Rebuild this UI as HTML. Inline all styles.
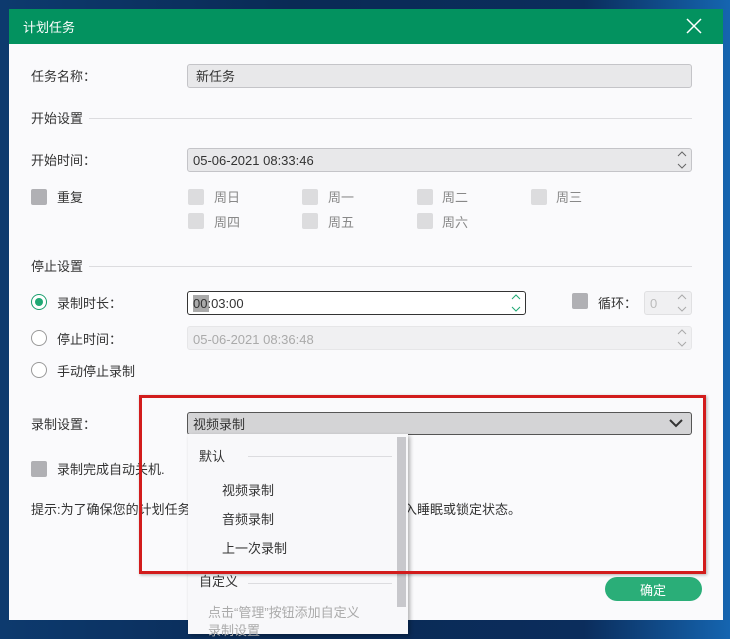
<!DOCTYPE html><html><head><meta charset="utf-8"><style>
*{margin:0;padding:0;box-sizing:border-box}
body{width:730px;height:630px;overflow:hidden;position:relative;background:linear-gradient(90deg,#0d3a6e 0%,#0a2a55 40%,#0b2d5c 80%,#1565b0 100%);font-family:"Liberation Sans","Noto Sans CJK SC",sans-serif;font-size:13px;color:#333}
.a{position:absolute}
.t{position:absolute;line-height:16px;white-space:nowrap;margin-top:1px}
.dlg{left:9px;top:9px;width:714px;height:611px;background:#fafafc}
.bar{left:9px;top:9px;width:714px;height:35px;background:#03925f}
.inp{position:absolute;border:1px solid #c4c4c8;border-radius:3px;background:#e8e8ea}
.cb{position:absolute;width:16px;height:16px;background:#dcdcde;border-radius:2px}
.cbd{background:#b0b0b4}
.line{position:absolute;height:1px;background:#dcdcdf}
.rad{position:absolute;width:16px;height:16px;border:1px solid #999;border-radius:50%;background:#fff}
.sp{position:absolute}
</style></head><body>
<div class="a dlg"></div>
<div class="a bar"></div>
<div class="t" style="left:23px;top:19px;color:#fff">计划任务</div>
<svg class="a" style="left:686px;top:18px" width="16" height="16"><path d="M1 1L15 15M15 1L1 15" stroke="#fff" stroke-width="1.5"/></svg>

<div class="t" style="left:31px;top:68px">任务名称：</div>
<div class="inp" style="left:187px;top:64px;width:505px;height:24px"></div>
<div class="t" style="left:196px;top:68px">新任务</div>

<div class="t" style="left:31px;top:110px">开始设置</div>
<div class="line" style="left:89px;top:118px;width:603px"></div>

<div class="t" style="left:31px;top:152px">开始时间：</div>
<div class="inp" style="left:187px;top:148px;width:505px;height:24px"></div>
<div class="t" style="left:193px;top:152px">05-06-2021 08:33:46</div>
<svg class="sp" style="left:677px;top:151px" width="10" height="18"><path d="M1 5L5 1L9 5M1 13L5 17L9 13" stroke="#666" fill="none"/></svg>

<div class="cb cbd" style="left:31px;top:189px"></div>
<div class="t" style="left:57px;top:189px">重复</div>
<div class="cb" style="left:188px;top:189px"></div><div class="t" style="left:214px;top:189px;color:#888">周日</div>
<div class="cb" style="left:302px;top:189px"></div><div class="t" style="left:328px;top:189px;color:#888">周一</div>
<div class="cb" style="left:417px;top:189px"></div><div class="t" style="left:442px;top:189px;color:#888">周二</div>
<div class="cb" style="left:531px;top:189px"></div><div class="t" style="left:556px;top:189px;color:#888">周三</div>
<div class="cb" style="left:188px;top:213px"></div><div class="t" style="left:214px;top:214px;color:#888">周四</div>
<div class="cb" style="left:302px;top:213px"></div><div class="t" style="left:328px;top:214px;color:#888">周五</div>
<div class="cb" style="left:417px;top:213px"></div><div class="t" style="left:442px;top:214px;color:#888">周六</div>

<div class="t" style="left:31px;top:258px">停止设置</div>
<div class="line" style="left:89px;top:266px;width:603px"></div>

<div class="rad" style="left:31px;top:294px;border-color:#1a9e6e"></div>
<div class="a" style="left:35px;top:298px;width:8px;height:8px;border-radius:50%;background:#1fa874"></div>
<div class="t" style="left:57px;top:295px">录制时长：</div>
<div class="inp" style="left:187px;top:291px;width:339px;height:24px;background:#fff;border-color:#333"></div>
<div class="a" style="left:193px;top:295px;width:16px;height:17px;background:#aaa"></div>
<div class="t" style="left:193px;top:295px">00:03:00</div>
<svg class="sp" style="left:511px;top:294px" width="10" height="18"><path d="M1 5L5 1L9 5M1 13L5 17L9 13" stroke="#1fa874" fill="none"/></svg>
<div class="cb cbd" style="left:572px;top:293px"></div>
<div class="t" style="left:598px;top:295px">循环：</div>
<div class="inp" style="left:644px;top:291px;width:48px;height:24px;background:#f0f0f2;border-color:#e0e0e2"></div>
<div class="t" style="left:650px;top:295px;color:#bbb">0</div>
<svg class="sp" style="left:677px;top:294px" width="10" height="18"><path d="M1 5L5 1L9 5M1 13L5 17L9 13" stroke="#aaa" fill="none"/></svg>

<div class="rad" style="left:31px;top:330px"></div>
<div class="t" style="left:57px;top:331px">停止时间：</div>
<div class="inp" style="left:187px;top:326px;width:505px;height:24px;background:#f0f0f2;border-color:#e6e6e8"></div>
<div class="t" style="left:193px;top:331px;color:#aaa">05-06-2021 08:36:48</div>
<svg class="sp" style="left:677px;top:329px" width="10" height="18"><path d="M1 5L5 1L9 5M1 13L5 17L9 13" stroke="#aaa" fill="none"/></svg>

<div class="rad" style="left:31px;top:362px"></div>
<div class="t" style="left:57px;top:363px">手动停止录制</div>

<div class="t" style="left:31px;top:416px">录制设置：</div>
<div class="inp" style="left:187px;top:412px;width:505px;height:23px;background:#d4d4d6;border-color:#555"></div>
<div class="t" style="left:193px;top:416px">视频录制</div>
<svg class="a" style="left:669px;top:418px" width="14" height="10"><path d="M1 2L7 8L13 2" stroke="#333" stroke-width="2" fill="none"/></svg>

<div class="cb cbd" style="left:31px;top:461px"></div>
<div class="t" style="left:57px;top:461px">录制完成自动关机.</div>
<div class="t" style="left:31px;top:501px">提示:为了确保您的计划任务能正常执行</div>
<div class="t" style="left:404px;top:501px">入睡眠或锁定状态。</div>

<div class="a" style="left:605px;top:577px;width:97px;height:24px;border-radius:12px;background:#2aae78"></div>
<div class="t" style="left:640px;top:582px;color:#fff">确定</div>

<div class="a" style="left:188px;top:434px;width:220px;height:200px;background:#f8f8fa;box-shadow:2px 2px 4px rgba(0,0,0,.3)"></div>
<div class="a" style="left:397px;top:437px;width:9px;height:170px;background:#c8c8cc"></div>
<div class="t" style="left:199px;top:448px">默认</div>
<div class="line" style="left:248px;top:456px;width:144px"></div>
<div class="t" style="left:222px;top:482px">视频录制</div>
<div class="t" style="left:222px;top:511px">音频录制</div>
<div class="t" style="left:222px;top:540px">上一次录制</div>
<div class="t" style="left:199px;top:573px">自定义</div>
<div class="line" style="left:248px;top:583px;width:144px"></div>
<div class="t" style="left:208px;top:604px;color:#aaa">点击“管理”按钮添加自定义</div>
<div class="t" style="left:208px;top:622px;color:#aaa">录制设置</div>

<div class="a" style="left:139px;top:395px;width:567px;height:179px;border:3px solid #d21c1c;box-shadow:1px 1px 3px rgba(0,0,0,.3)"></div>
</body></html>
